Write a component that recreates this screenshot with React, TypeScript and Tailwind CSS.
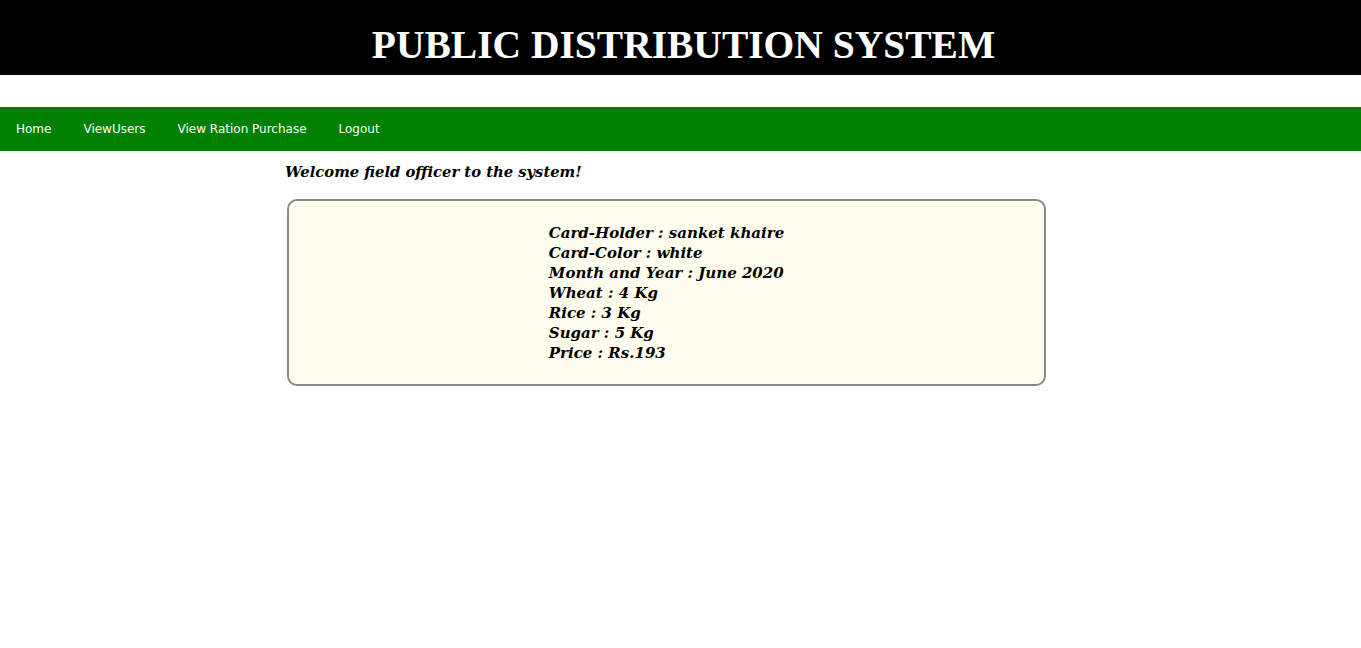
import React from "react";

const navItems = ["Home", "ViewUsers", "View Ration Purchase", "Logout"];

const details = [
  "Card-Holder : sanket khaire",
  "Card-Color : white",
  "Month and Year : June 2020",
  "Wheat : 4 Kg",
  "Rice : 3 Kg",
  "Sugar : 5 Kg",
  "Price : Rs.193",
];

export default function App() {
  return (
    <div className="min-h-[648px] bg-white">
      <div className="flex h-[75px] items-start justify-center bg-black pt-[26px] pl-[6px]">
        <h1 className="font-['Liberation_Serif',serif] text-[39.5px] font-bold leading-none text-white">
          PUBLIC DISTRIBUTION SYSTEM
        </h1>
      </div>
      <nav className="mt-8 flex h-11 items-center bg-[#008000] font-['DejaVu_Sans',sans-serif] text-xs text-white">
        {navItems.map((item) => (
          <a key={item} className="px-4">
            {item}
          </a>
        ))}
      </nav>
      <div className="ml-[285px] w-[761px] font-['DejaVu_Serif',serif] font-bold italic text-black">
        <p className="mt-[11px] text-[14.75px] leading-5">Welcome field officer to the system!</p>
        <div className="mt-[17px] ml-[2px] flex justify-center rounded-[10px] border-2 border-[#888] bg-[#fffdee] pt-[22px] pb-[21px]">
          <div className="text-[15px] leading-5">
            {details.map((line) => (
              <div key={line}>{line}</div>
            ))}
          </div>
        </div>
      </div>
    </div>
  );
}
